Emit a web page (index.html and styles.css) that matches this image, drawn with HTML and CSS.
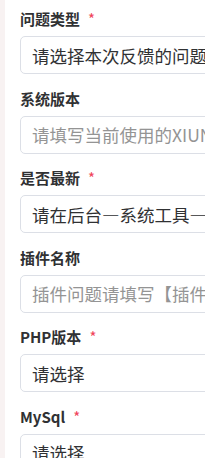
FILE: index.html
```html
<!DOCTYPE html>
<html lang="zh-CN">
<head>
    <meta charset="UTF-8">
    <meta name="viewport" content="width=device-width, initial-scale=1.0">
    <title>问题反馈</title>
    <link rel="stylesheet" href="styles.css">
</head>
<body>
    <div class="page">
        <form class="feedback-form">
            <div class="form-item">
                <label class="form-label">问题类型<span class="required">*</span></label>
                <select class="form-control">
                    <option>请选择本次反馈的问题类型</option>
                </select>
            </div>
            <div class="form-item">
                <label class="form-label">系统版本</label>
                <input class="form-control" type="text" placeholder="请填写当前使用的XIUNO版本号">
            </div>
            <div class="form-item">
                <label class="form-label">是否最新<span class="required">*</span></label>
                <select class="form-control">
                    <option>请在后台—系统工具—检查更新</option>
                </select>
            </div>
            <div class="form-item">
                <label class="form-label">插件名称</label>
                <input class="form-control" type="text" placeholder="插件问题请填写【插件名称】">
            </div>
            <div class="form-item">
                <label class="form-label">PHP版本<span class="required">*</span></label>
                <select class="form-control">
                    <option>请选择</option>
                </select>
            </div>
            <div class="form-item">
                <label class="form-label">MySql<span class="required">*</span></label>
                <select class="form-control">
                    <option>请选择</option>
                </select>
            </div>
        </form>
    </div>
</body>
</html>
```

FILE: styles.css
```css
body {
    margin: 0;
    font-family: "Noto Sans CJK SC", "Noto Sans", sans-serif;
    color: #333;
    background: #fff;
    overflow: hidden;
}
.page {
    border-left: 5px solid #f8f2f2; /* sidebar edge */
    height: 458px;
    overflow: hidden;
}
.feedback-form {
    padding: 8px 0 0 15px;
}
.form-item {
    margin-bottom: 13.6px;
}
.form-label {
    display: block;
    font-size: 15px;
    font-weight: bold;
    line-height: 22px;
    margin-bottom: 6px;
    color: #303133;
}
.required {
    color: #f0435a;
    margin-left: 8px;
    font-weight: normal;
}
.form-control {
    display: block;
    box-sizing: border-box;
    width: 320px;
    height: 38px;
    padding: 0 11px;
    border: 1px solid #dcdfe6;
    border-radius: 5px;
    background: #fff;
    font-family: inherit;
    font-size: 17.5px;
    color: #303133;
    appearance: none;
    outline: none;
}
.form-control::placeholder {
    color: #949494;
}
```
